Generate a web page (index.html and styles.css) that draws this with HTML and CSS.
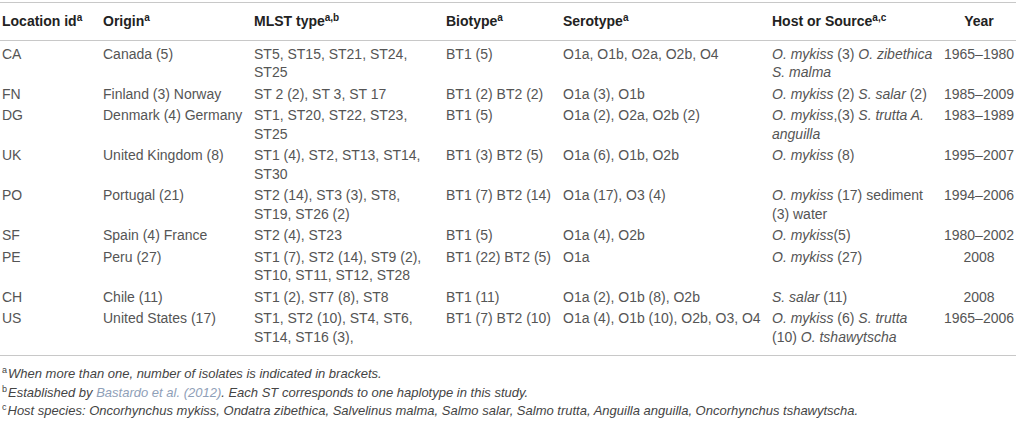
FILE: index.html
```html
<!DOCTYPE html>
<html lang="en">
<head>
    <meta charset="UTF-8">
    <title>Isolates table</title>
    <link rel="stylesheet" href="styles.css">
</head>
<body>
<table class="data">
    <colgroup>
        <col class="c-loc">
        <col class="c-origin">
        <col class="c-mlst">
        <col class="c-bio">
        <col class="c-sero">
        <col class="c-host">
        <col class="c-year">
    </colgroup>
    <thead>
        <tr>
            <th>Location id<sup>a</sup></th>
            <th>Origin<sup>a</sup></th>
            <th>MLST type<sup>a,b</sup></th>
            <th>Biotype<sup>a</sup></th>
            <th>Serotype<sup>a</sup></th>
            <th>Host or Source<sup>a,c</sup></th>
            <th class="year">Year</th>
        </tr>
    </thead>
    <tbody>
        <tr>
            <td>CA</td>
            <td>Canada (5)</td>
            <td>ST5, ST15, ST21, ST24, ST25</td>
            <td>BT1 (5)</td>
            <td>O1a, O1b, O2a, O2b, O4</td>
            <td class="host"><i>O. mykiss</i> (3) <i>O. zibethica S. malma</i></td>
            <td class="year">1965–1980</td>
        </tr>
        <tr>
            <td>FN</td>
            <td>Finland (3) Norway</td>
            <td>ST 2 (2), ST 3, ST 17</td>
            <td>BT1 (2) BT2 (2)</td>
            <td>O1a (3), O1b</td>
            <td class="host"><i>O. mykiss</i> (2) <i>S. salar</i> (2)</td>
            <td class="year">1985–2009</td>
        </tr>
        <tr>
            <td>DG</td>
            <td>Denmark (4) Germany</td>
            <td>ST1, ST20, ST22, ST23, ST25</td>
            <td>BT1 (5)</td>
            <td>O1a (2), O2a, O2b (2)</td>
            <td class="host"><i>O. mykiss</i>,(3) <i>S. trutta A. anguilla</i></td>
            <td class="year">1983–1989</td>
        </tr>
        <tr>
            <td>UK</td>
            <td>United Kingdom (8)</td>
            <td>ST1 (4), ST2, ST13, ST14, ST30</td>
            <td>BT1 (3) BT2 (5)</td>
            <td>O1a (6), O1b, O2b</td>
            <td class="host"><i>O. mykiss</i> (8)</td>
            <td class="year">1995–2007</td>
        </tr>
        <tr>
            <td>PO</td>
            <td>Portugal (21)</td>
            <td>ST2 (14), ST3 (3), ST8, ST19, ST26 (2)</td>
            <td>BT1 (7) BT2 (14)</td>
            <td>O1a (17), O3 (4)</td>
            <td class="host"><i>O. mykiss</i> (17) sediment (3) water</td>
            <td class="year">1994–2006</td>
        </tr>
        <tr>
            <td>SF</td>
            <td>Spain (4) France</td>
            <td>ST2 (4), ST23</td>
            <td>BT1 (5)</td>
            <td>O1a (4), O2b</td>
            <td class="host"><i>O. mykiss</i>(5)</td>
            <td class="year">1980–2002</td>
        </tr>
        <tr>
            <td>PE</td>
            <td>Peru (27)</td>
            <td>ST1 (7), ST2 (14), ST9 (2), ST10, ST11, ST12, ST28</td>
            <td>BT1 (22) BT2 (5)</td>
            <td>O1a</td>
            <td class="host"><i>O. mykiss</i> (27)</td>
            <td class="year">2008</td>
        </tr>
        <tr>
            <td>CH</td>
            <td>Chile (11)</td>
            <td>ST1 (2), ST7 (8), ST8</td>
            <td>BT1 (11)</td>
            <td>O1a (2), O1b (8), O2b</td>
            <td class="host"><i>S. salar</i> (11)</td>
            <td class="year">2008</td>
        </tr>
        <tr>
            <td>US</td>
            <td>United States (17)</td>
            <td>ST1, ST2 (10), ST4, ST6, ST14, ST16 (3),</td>
            <td>BT1 (7) BT2 (10)</td>
            <td>O1a (4), O1b (10), O2b, O3, O4</td>
            <td class="host"><i>O. mykiss</i> (6) <i>S. trutta</i> (10) <i>O. tshawytscha</i></td>
            <td class="year">1965–2006</td>
        </tr>
    </tbody>
</table>
<div class="notes">
    <p><sup>a</sup>When more than one, number of isolates is indicated in brackets.</p>
    <p><sup>b</sup>Established by <a href="#">Bastardo et al. (2012)</a>. Each ST corresponds to one haplotype in this study.</p>
    <p><sup>c</sup>Host species: Oncorhynchus mykiss, Ondatra zibethica, Salvelinus malma, Salmo salar, Salmo trutta, Anguilla anguilla, Oncorhynchus tshawytscha.</p>
</div>
</body>
</html>
```

FILE: styles.css
```css
body {
    margin: 0;
    padding: 2px 0 0;
    background-color: #fff;
    color: #555;
    font-family: 'Liberation Sans', Arial, sans-serif;
    font-size: 14px;
}
.data {
    width: 1016px;
    border-collapse: collapse;
    table-layout: fixed;
    line-height: 18.5px;
}
.c-loc { width: 101px; }
.c-origin { width: 151px; }
.c-mlst { width: 192px; }
.c-bio { width: 117px; }
.c-sero { width: 209px; }
.c-host { width: 172px; }
.c-year { width: 74px; }
.data thead tr {
    border-top: 1px solid #c8c8c8;
    border-bottom: 1px solid #c8c8c8;
}
.data th {
    text-align: left;
    font-weight: bold;
    color: #222;
    padding: 9px 6px 9.5px 2px;
}
.data td {
    vertical-align: top;
    padding: 1.5px 8px 1.5px 2px;
}
.data tbody tr:first-child td {
    padding-top: 3.75px;
}
.data tbody tr:last-child td {
    padding-bottom: 8.75px;
}
.data tbody tr:last-child {
    border-bottom: 1px solid #c8c8c8;
}
.data .year {
    text-align: center;
    padding-left: 0;
    padding-right: 0;
}
sup {
    font-size: 10px;
    line-height: 0;
    vertical-align: 5px;
}
.notes {
    padding-top: 9px;
    font-size: 13px;
    font-style: italic;
    line-height: 18.5px;
    color: #444;
}
.notes p {
    margin: 0;
    padding-left: 2px;
}
.notes sup {
    font-style: normal;
    font-size: 9px;
    margin-right: 1px;
}
.notes a {
    color: #8fa0b8;
    text-decoration: none;
}
```
